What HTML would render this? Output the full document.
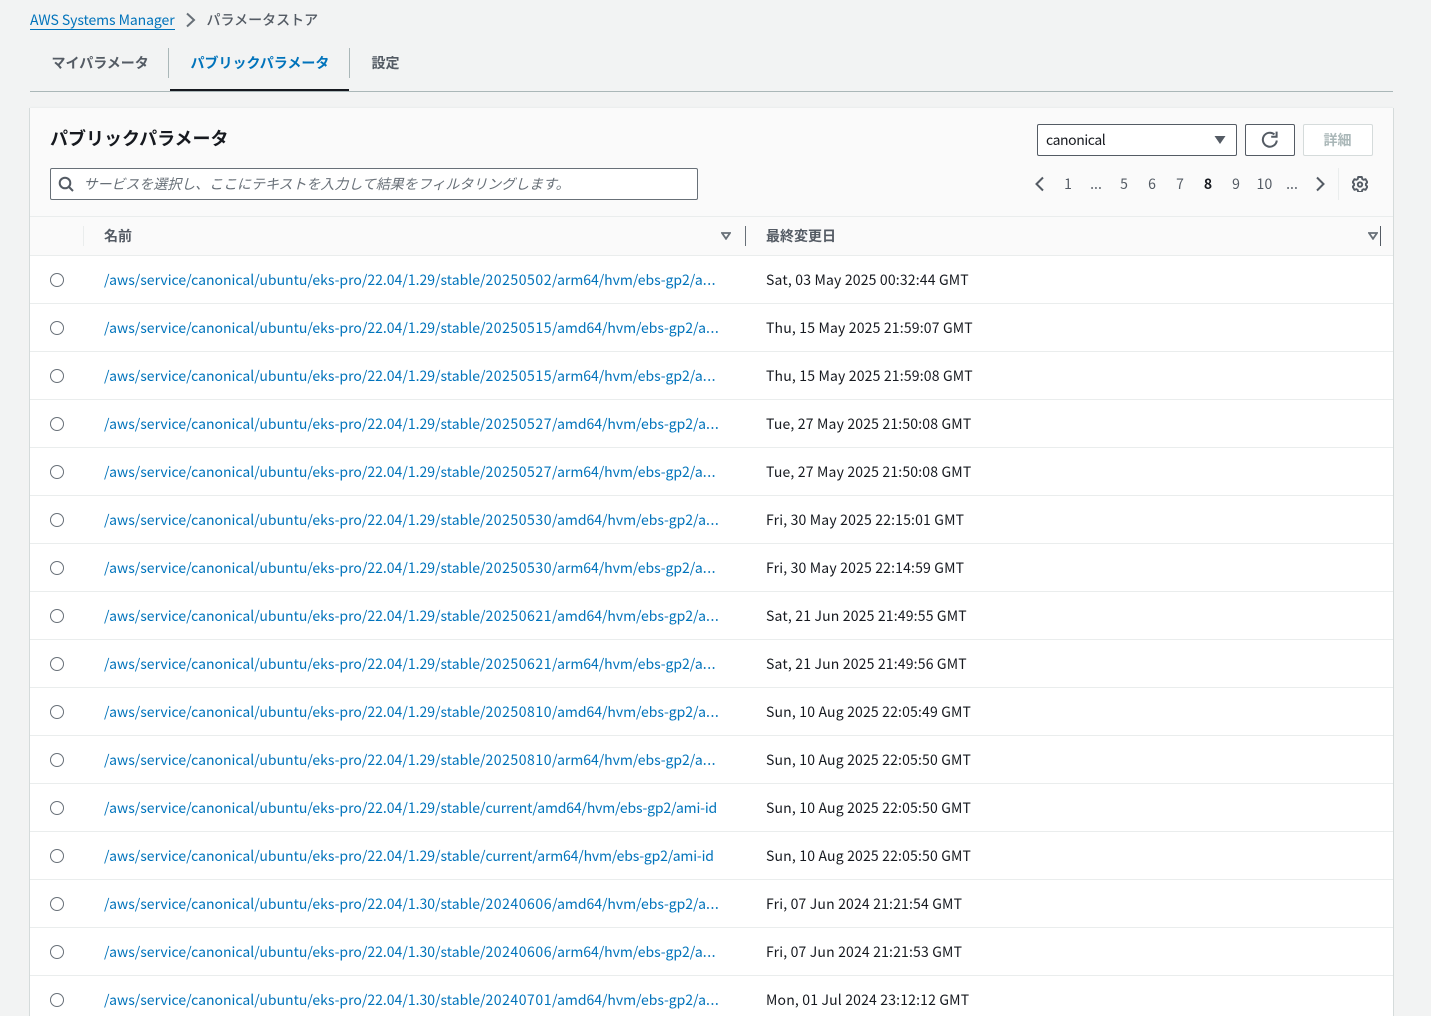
<!DOCTYPE html>
<html lang="ja"><head><meta charset="utf-8">
<style>
html,body{margin:0;padding:0;width:1431px;height:1016px;overflow:hidden}
#w{position:relative;width:1431px;height:1016px;overflow:hidden;background:#f2f3f3;font-family:"Liberation Sans","Noto Sans CJK JP",sans-serif;font-size:14px;color:#16191f}
.a{position:absolute;white-space:nowrap}
.j{font-family:"Noto Sans CJK JP",sans-serif}
.card{position:absolute;left:30px;top:108px;width:1363px;height:908px;background:#fafafa;box-shadow:-1px 0 0 #d5dbdb,1px 0 0 #d5dbdb,0 -1px 1px #eaeded}
.row{position:absolute;left:0;width:1363px;height:47px;background:#fff;border-bottom:1px solid #eaeded}
.row i{position:absolute;left:20px;top:17px;width:12px;height:12px;border:1px solid #687078;border-radius:50%;background:#fff}
.row a{position:absolute;left:74px;top:14px;line-height:20px;color:#0073bb;white-space:nowrap;font-family:"Noto Sans CJK JP",sans-serif;font-size:14px}
.row a em{font-style:normal;letter-spacing:.55px}
.row a s{text-decoration:none;letter-spacing:.6px}
.row a u{text-decoration:none;letter-spacing:-.04px}
.row a.c u{letter-spacing:-.17px}
.row span{position:absolute;left:736px;top:14px;line-height:20px;white-space:nowrap;font-family:"Noto Sans CJK JP",sans-serif;font-size:14px;color:#16191f;letter-spacing:.17px}
.pg{position:absolute;top:174px;line-height:20px;color:#545b64;font-family:"Noto Sans CJK JP",sans-serif;width:28px;text-align:center}
</style></head><body><div id="w">
<a class="a j" style="left:30px;top:10px;line-height:20px;color:#0073bb;border-bottom:1px solid #0073bb;height:19px;letter-spacing:-.08px">AWS Systems Manager</a>
<svg class="a" style="left:184px;top:12px" width="14" height="16" viewBox="0 0 14 16"><path d="M3 1.5l7 6.5-7 6.5" fill="none" stroke="#687078" stroke-width="2"/></svg>
<div class="a j" style="left:206.5px;top:10px;line-height:20px;color:#545b64;font-weight:500">パラメータストア</div>

<div class="a" style="left:30px;top:91px;width:1363px;height:1px;background:#aab7b8"></div>
<div class="a j" style="left:51.5px;top:53px;line-height:20px;font-weight:700;color:#545b64">マイパラメータ</div>
<div class="a" style="left:168px;top:48px;width:1px;height:30px;background:#aab7b8"></div>
<div class="a j" style="left:190.5px;top:53px;line-height:20px;font-weight:700;color:#0073bb">パブリックパラメータ</div>
<div class="a" style="left:170px;top:89px;width:179px;height:2px;background:#16191f"></div>
<div class="a" style="left:349px;top:48px;width:1px;height:30px;background:#aab7b8"></div>
<div class="a j" style="left:371.5px;top:53px;line-height:20px;font-weight:700;color:#545b64">設定</div>

<div class="card">
<div class="a" style="left:0;top:108px;width:1363px;height:40px;background:#fafafa;border-top:1px solid #eaeded;border-bottom:1px solid #eaeded;box-sizing:border-box"></div>
<div class="row" style="top:148px"><i></i><a>/aws/service/canonical/ubuntu/eks-pro/22.04/1.29/stable/<em>20250502</em><u>/arm64/hvm/ebs-gp2/a</u><s>...</s></a><span>Sat, 03 May 2025 00:32:44 GMT</span></div>
<div class="row" style="top:196px"><i></i><a>/aws/service/canonical/ubuntu/eks-pro/22.04/1.29/stable/<em>20250515</em><u>/amd64/hvm/ebs-gp2/a</u><s>...</s></a><span>Thu, 15 May 2025 21:59:07 GMT</span></div>
<div class="row" style="top:244px"><i></i><a>/aws/service/canonical/ubuntu/eks-pro/22.04/1.29/stable/<em>20250515</em><u>/arm64/hvm/ebs-gp2/a</u><s>...</s></a><span>Thu, 15 May 2025 21:59:08 GMT</span></div>
<div class="row" style="top:292px"><i></i><a>/aws/service/canonical/ubuntu/eks-pro/22.04/1.29/stable/<em>20250527</em><u>/amd64/hvm/ebs-gp2/a</u><s>...</s></a><span>Tue, 27 May 2025 21:50:08 GMT</span></div>
<div class="row" style="top:340px"><i></i><a>/aws/service/canonical/ubuntu/eks-pro/22.04/1.29/stable/<em>20250527</em><u>/arm64/hvm/ebs-gp2/a</u><s>...</s></a><span>Tue, 27 May 2025 21:50:08 GMT</span></div>
<div class="row" style="top:388px"><i></i><a>/aws/service/canonical/ubuntu/eks-pro/22.04/1.29/stable/<em>20250530</em><u>/amd64/hvm/ebs-gp2/a</u><s>...</s></a><span>Fri, 30 May 2025 22:15:01 GMT</span></div>
<div class="row" style="top:436px"><i></i><a>/aws/service/canonical/ubuntu/eks-pro/22.04/1.29/stable/<em>20250530</em><u>/arm64/hvm/ebs-gp2/a</u><s>...</s></a><span>Fri, 30 May 2025 22:14:59 GMT</span></div>
<div class="row" style="top:484px"><i></i><a>/aws/service/canonical/ubuntu/eks-pro/22.04/1.29/stable/<em>20250621</em><u>/amd64/hvm/ebs-gp2/a</u><s>...</s></a><span>Sat, 21 Jun 2025 21:49:55 GMT</span></div>
<div class="row" style="top:532px"><i></i><a>/aws/service/canonical/ubuntu/eks-pro/22.04/1.29/stable/<em>20250621</em><u>/arm64/hvm/ebs-gp2/a</u><s>...</s></a><span>Sat, 21 Jun 2025 21:49:56 GMT</span></div>
<div class="row" style="top:580px"><i></i><a>/aws/service/canonical/ubuntu/eks-pro/22.04/1.29/stable/<em>20250810</em><u>/amd64/hvm/ebs-gp2/a</u><s>...</s></a><span>Sun, 10 Aug 2025 22:05:49 GMT</span></div>
<div class="row" style="top:628px"><i></i><a>/aws/service/canonical/ubuntu/eks-pro/22.04/1.29/stable/<em>20250810</em><u>/arm64/hvm/ebs-gp2/a</u><s>...</s></a><span>Sun, 10 Aug 2025 22:05:50 GMT</span></div>
<div class="row" style="top:676px"><i></i><a class="c">/aws/service/canonical/ubuntu/eks-pro/22.04/1.29/stable/<u>current/amd64/hvm/ebs-gp2/ami-id</u></a><span>Sun, 10 Aug 2025 22:05:50 GMT</span></div>
<div class="row" style="top:724px"><i></i><a class="c">/aws/service/canonical/ubuntu/eks-pro/22.04/1.29/stable/<u>current/arm64/hvm/ebs-gp2/ami-id</u></a><span>Sun, 10 Aug 2025 22:05:50 GMT</span></div>
<div class="row" style="top:772px"><i></i><a>/aws/service/canonical/ubuntu/eks-pro/22.04/1.30/stable/<em>20240606</em><u>/amd64/hvm/ebs-gp2/a</u><s>...</s></a><span>Fri, 07 Jun 2024 21:21:54 GMT</span></div>
<div class="row" style="top:820px"><i></i><a>/aws/service/canonical/ubuntu/eks-pro/22.04/1.30/stable/<em>20240606</em><u>/arm64/hvm/ebs-gp2/a</u><s>...</s></a><span>Fri, 07 Jun 2024 21:21:53 GMT</span></div>
<div class="row" style="top:868px"><i></i><a>/aws/service/canonical/ubuntu/eks-pro/22.04/1.30/stable/<em>20240701</em><u>/amd64/hvm/ebs-gp2/a</u><s>...</s></a><span>Mon, 01 Jul 2024 23:12:12 GMT</span></div>
</div>

<div class="a j" style="left:50px;top:125px;line-height:26px;font-size:18px;font-weight:700;color:#16191f">パブリックパラメータ</div>
<div class="a" style="left:50px;top:168px;width:648px;height:32px;box-sizing:border-box;background:#fff;border:1px solid #687078;border-radius:2px"></div>
<svg class="a" style="left:58px;top:176px" width="16" height="16" viewBox="0 0 16 16"><circle cx="7" cy="7" r="5.3" fill="none" stroke="#545b64" stroke-width="2"/><path d="M11 11l4 4" stroke="#545b64" stroke-width="2" fill="none"/></svg>
<div class="a j" style="left:84px;top:174px;line-height:20px;font-style:italic;color:#687078;letter-spacing:-.04px;margin-left:-.5px">サービスを選択し、ここにテキストを入力して結果をフィルタリングします。</div>

<div class="a" style="left:1037px;top:124px;width:200px;height:32px;box-sizing:border-box;background:#fff;border:1px solid #545b64;border-radius:2px"></div>
<div class="a j" style="left:1046px;top:130px;line-height:20px;color:#16191f;letter-spacing:-.42px">canonical</div>
<svg class="a" style="left:1214px;top:135px" width="12" height="10" viewBox="0 0 12 10"><path d="M0.5 1h11L6 9z" fill="#545b64"/></svg>
<div class="a" style="left:1245px;top:124px;width:50px;height:32px;box-sizing:border-box;background:#fff;border:1px solid #545b64;border-radius:2px"></div>
<svg class="a" style="left:1261px;top:131px" width="18" height="18" viewBox="0 0 18 18"><path d="M15.8 9.5A7 7 0 1 1 13.4 3.4" fill="none" stroke="#545b64" stroke-width="2"/><path d="M10.2 5.8h5.4V.6" fill="none" stroke="#545b64" stroke-width="2"/></svg>
<div class="a" style="left:1303px;top:124px;width:70px;height:32px;box-sizing:border-box;background:#fff;border:1px solid #d5dbdb;border-radius:2px"></div>
<div class="a j" style="left:1323.5px;top:130px;line-height:20px;font-weight:700;color:#aab7b8">詳細</div>

<svg class="a" style="left:1034px;top:176px" width="12" height="16" viewBox="0 0 12 16"><path d="M9 1.5L2.5 8 9 14.5" fill="none" stroke="#545b64" stroke-width="2"/></svg>
<div class="pg" style="left:1054px">1</div>
<div class="pg" style="left:1082px">...</div>
<div class="pg" style="left:1110px">5</div>
<div class="pg" style="left:1138px">6</div>
<div class="pg" style="left:1166px">7</div>
<div class="pg" style="left:1194px;font-weight:700;color:#16191f">8</div>
<div class="pg" style="left:1222px">9</div>
<div class="pg" style="left:1250.5px;letter-spacing:.2px">10</div>
<div class="pg" style="left:1278px">...</div>
<svg class="a" style="left:1314px;top:176px" width="12" height="16" viewBox="0 0 12 16"><path d="M3 1.5L9.5 8 3 14.5" fill="none" stroke="#545b64" stroke-width="2"/></svg>
<div class="a" style="left:1338px;top:168px;width:1px;height:32px;background:#eaeded"></div>
<svg class="a" style="left:1352px;top:176px" width="16" height="16" viewBox="0 0 16 16"><path d="M6.2 1h3.6l.5 2.1 1.2.7 2.1-.6 1.8 3.1-1.5 1.5v1.4l1.5 1.5-1.8 3.1-2.1-.6-1.2.7-.5 2.1H6.2l-.5-2.1-1.2-.7-2.1.6L.6 10.7l1.5-1.5V7.8L.6 6.3l1.8-3.1 2.1.6 1.2-.7z" fill="none" stroke="#545b64" stroke-width="1.9" stroke-linejoin="round"/><circle cx="8" cy="8.5" r="2.2" fill="none" stroke="#545b64" stroke-width="1.9"/></svg>

<div class="a" style="left:83px;top:226px;width:1px;height:20px;background:#eaeded"></div>
<div class="a j" style="left:104px;top:226px;line-height:20px;font-weight:700;color:#545b64">名前</div>
<svg class="a" style="left:721px;top:232px" width="10" height="8" viewBox="0 0 10 8"><path d="M1 1h8L5 6.8z" fill="none" stroke="#687078" stroke-width="1.8"/></svg>
<div class="a" style="left:745px;top:226px;width:1px;height:20px;background:#687078"></div>
<div class="a j" style="left:766px;top:226px;line-height:20px;font-weight:700;color:#545b64">最終変更日</div>
<svg class="a" style="left:1368px;top:232px" width="10" height="8" viewBox="0 0 10 8"><path d="M1 1h8L5 6.8z" fill="none" stroke="#687078" stroke-width="1.8"/></svg>
<div class="a" style="left:1380px;top:226px;width:1px;height:20px;background:#545b64"></div>
</div></body></html>
